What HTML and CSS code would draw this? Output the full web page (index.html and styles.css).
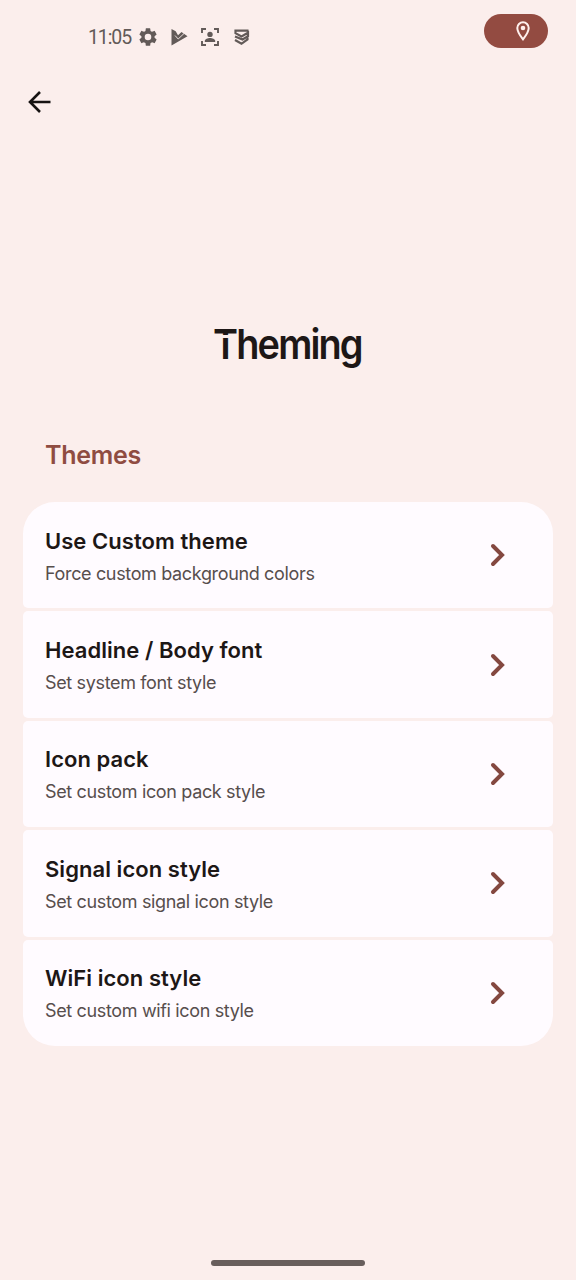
FILE: index.html
```html
<!DOCTYPE html>
<html lang="en">
<head>
<meta charset="utf-8">
<title>Theming</title>
<link rel="stylesheet" href="styles.css">
</head>
<body>
<svg class="defs" width="0" height="0">
  <symbol id="chevron" viewBox="0 0 16 24"><path d="M3 3l9 9-9 9" fill="none" stroke="currentColor" stroke-width="4" stroke-linecap="round" stroke-linejoin="miter"/></symbol>
</svg>
<header class="status">
  <span class="clock">11:05</span>
  <svg class="status-icon gear" viewBox="0 0 24 24"><path fill="currentColor" d="M19.140 12.940c.04-.3.060-.61.060-.94s-.02-.64-.07-.94l2.030-1.580a.49.490 0 0 0 .12-.61l-1.920-3.320a.488.488 0 0 0-.59-.22l-2.390.96c-.5-.38-1.030-.7-1.620-.94l-.36-2.540a.484.484 0 0 0-.48-.41h-3.840c-.24 0-.43.17-.47.410l-.36 2.540c-.59.240-1.130.57-1.620.94l-2.390-.96c-.22-.08-.47 0-.59.220L2.740 8.870c-.12.210-.08.470.12.610l2.030 1.580c-.05.3-.09.630-.09.940s.02.640.07.940l-2.030 1.580a.49.490 0 0 0-.12.610l1.920 3.320c.12.220.37.290.59.220l2.390-.96c.5.380 1.030.7 1.620.94l.36 2.540c.05.240.24.410.48.410h3.840c.24 0 .44-.17.470-.41l.36-2.540c.59-.24 1.130-.56 1.620-.94l2.390.96c.22.080.47 0 .59-.22l1.920-3.320c.12-.22.070-.47-.12-.61zM12 15.600A3.600 3.600 0 1 1 12 8.400a3.600 3.600 0 0 1 0 7.200z"/></svg>
  <svg class="status-icon" viewBox="0 0 20 20"><path fill="currentColor" d="M2.500 2l4.200 2.300 2.300 4 3.500-3.300 6 4.300L2.500 18.500z"/><path d="M6 8.500l3.200 3.500 5.800-5.500" fill="none" stroke="#fbeeec" stroke-width=".9"/></svg>
  <svg class="status-icon" viewBox="0 0 20 20"><path d="M2 6V2h4M14 2h4v4M18 14v4h-4M6 18H2v-4" fill="none" stroke="currentColor" stroke-width="1.900"/><circle cx="10" cy="7.400" r="2.700" fill="currentColor"/><path fill="currentColor" d="M4.800 15v-1.200c0-1.900 3-2.900 5.200-2.900s5.200 1 5.200 2.900V15z"/></svg>
  <svg class="status-icon" viewBox="0 0 20 20"><path d="M17.500 3.700H4.500v2.500l6 3.300 6-3.500M17 3.700v5.500l-5.500 3.300L4 9.500M4 13l6.500 3.800 6-4.300V8.500" fill="none" stroke="currentColor" stroke-width="2.200"/></svg>
  <span class="pill"><svg viewBox="0 0 16 20"><path d="M8 1.300a5.700 5.700 0 0 0-5.700 5.700c0 4.200 5.700 11.300 5.700 11.300S13.700 11.200 13.700 7A5.700 5.700 0 0 0 8 1.300z" fill="none" stroke="currentColor" stroke-width="2"/><circle cx="8" cy="7" r="2.300" fill="currentColor"/></svg></span>
</header>
<nav class="toolbar"><svg viewBox="0 0 24 24"><path d="M22.500 12H2M12 2L2 12l10 10" fill="none" stroke="currentColor" stroke-width="2.600"/></svg></nav>
<main>
  <h1>Theming</h1>
  <h2>Themes</h2>
  <ul class="list">
    <li><div><h3>Use Custom theme</h3><p>Force custom background colors</p></div><svg class="chevron"><use href="#chevron"/></svg></li>
    <li><div><h3>Headline / Body font</h3><p>Set system font style</p></div><svg class="chevron"><use href="#chevron"/></svg></li>
    <li><div><h3>Icon pack</h3><p>Set custom icon pack style</p></div><svg class="chevron"><use href="#chevron"/></svg></li>
    <li><div><h3>Signal icon style</h3><p>Set custom signal icon style</p></div><svg class="chevron"><use href="#chevron"/></svg></li>
    <li><div><h3>WiFi icon style</h3><p>Set custom wifi icon style</p></div><svg class="chevron"><use href="#chevron"/></svg></li>
  </ul>
</main>
<footer><span class="handle"></span></footer>
</body>
</html>
```
FILE: styles.css
```css
* { box-sizing: border-box; margin: 0; padding: 0; }
body { height: 1280px; background: #fbeeec; color: #1d1716; font-family: Inter, Roboto, sans-serif; display: flex; flex-direction: column; overflow: hidden; }
svg { display: block; flex: none; }
.defs { position: absolute; }
.status { height: 74px; padding-left: 88px; padding-right: 28px; display: flex; align-items: center; color: #625a58; }
.clock { width: 50px; font-family: Roboto, sans-serif; font-size: 19.500px; letter-spacing: -1.100px; line-height: 24px; padding-top: 1px; }
.status-icon { width: 20px; height: 20px; margin-right: 11px; }
.gear { width: 22px; height: 22px; margin: 0 10px 0 -1px; }
.pill { width: 64px; height: 34px; margin: -12px 0 0 auto; border-radius: 17px; background: #934b41; color: #fff0ed; display: flex; align-items: center; padding-left: 31px; }
.pill svg { width: 16px; height: 20px; }
.toolbar { height: 56px; padding: 16px 0 0 28px; color: #171312; }
.toolbar svg { width: 24px; height: 24px; }
main { padding: 190px 23px 0; }
h1 { position: relative; width: 150px; margin: 0 auto; font-size: 41px; line-height: 48px; height: 50px; font-weight: 600; letter-spacing: -2px; white-space: nowrap; transform: scaleX(.925); transform-origin: left; }
/* Stencil cut between the bar and the stem of the T */
h1::after { content: ""; position: absolute; left: 7px; top: 15px; width: 13px; height: 3px; background: #fbeeec; }
h2 { margin: 65px 0 0 22px; font-size: 25px; line-height: 40px; font-weight: 600; letter-spacing: -.3px; color: #8f4c41; }
.list { margin-top: 27px; list-style: none; display: grid; gap: 3px; }
.list li { height: 106.400px; padding: 0 47px 0 22px; border-radius: 5px; background: #fffbff; display: flex; align-items: center; justify-content: space-between; }
.list li:first-child { border-radius: 32px 32px 5px 5px; }
.list li:last-child { border-radius: 5px 5px 32px 32px; }
.list li > div { padding-top: 4px; }
h3 { font-size: 22px; line-height: 32px; font-weight: 600; letter-spacing: .05px; white-space: nowrap; }
p { font-size: 18px; line-height: 33px; letter-spacing: -.35px; color: #574e4d; white-space: nowrap; }
.chevron { width: 16px; height: 24px; color: #844840; }
footer { margin-top: auto; height: 20px; display: flex; justify-content: center; }
.handle { width: 154px; height: 6px; border-radius: 3px; background: #685e5c; }
```
